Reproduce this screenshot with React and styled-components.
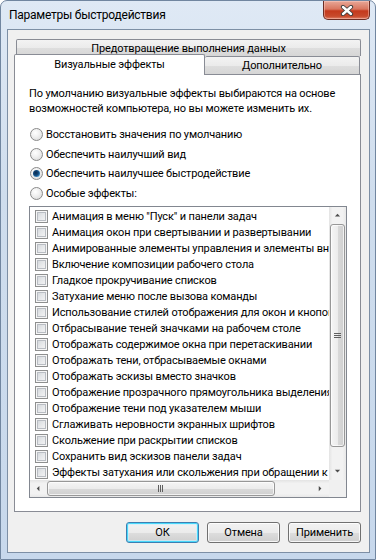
import React from 'react';
import styled, { createGlobalStyle } from 'styled-components';

const GlobalStyle = createGlobalStyle`
  html, body {
    margin: 0;
    padding: 0;
  }
  body {
    width: 376px;
    height: 560px;
    overflow: hidden;
    background: #ffffff;
    font-family: 'Segoe UI', Roboto, 'Noto Sans', sans-serif;
    font-size: 11px;
    letter-spacing: -0.15px;
    color: #000;
  }
`;

const Window = styled.div`
  box-sizing: border-box;
  width: 376px;
  height: 560px;
  display: flex;
  flex-direction: column;
  border: 1px solid #7186a0;
  border-radius: 7px 7px 0 0;
  background: linear-gradient(180deg, #dfe9f5 0%, #cfdded 35%, #c7d8ec 100%);
`;

const TitleBar = styled.div`
  height: 28px;
  display: flex;
  align-items: flex-start;
  flex-shrink: 0;
`;

const Title = styled.span`
  padding: 6px 0 0 8px;
  font-size: 12px;
  letter-spacing: -0.25px;
  line-height: 16px;
  white-space: nowrap;
`;

const CloseButton = styled.div`
  margin-left: auto;
  margin-right: 5px;
  width: 47px;
  height: 19px;
  box-sizing: border-box;
  display: flex;
  align-items: center;
  justify-content: center;
  border: 1px solid #6b2d24;
  border-top: none;
  border-radius: 0 0 5px 5px;
  background: linear-gradient(180deg, #e8a898 0%, #d9765f 45%, #c4391c 55%, #c84a2c 85%, #e0826a 100%);
  box-shadow: inset 0 0 0 1px rgba(255, 210, 200, 0.45);
`;

const Client = styled.div`
  flex: 1;
  margin: 0 5px 6px 6px;
  box-sizing: border-box;
  display: flex;
  flex-direction: column;
  padding: 9px 8px 9px 6px;
  border: 1px solid #7d8fa5;
  background: #f0f0f0;
`;

const TabBack = styled.div`
  height: 17px;
  margin-left: 2px;
  box-sizing: border-box;
  border: 1px solid #898c95;
  border-bottom: none;
  border-radius: 2px 2px 0 0;
  background: linear-gradient(180deg, #f3f3f3 0%, #ebebeb 50%, #dedede 51%, #d6d6d6 100%);
  text-align: center;
  line-height: 17px;
  white-space: nowrap;
  flex-shrink: 0;
`;

const TabRow = styled.div`
  position: relative;
  z-index: 1;
  display: flex;
  align-items: flex-start;
  height: 20px;
  margin-top: -2px;
  flex-shrink: 0;
`;

const Tab = styled.div`
  box-sizing: border-box;
  width: ${(p) => p.$width}px;
  height: ${(p) => (p.$active ? 21 : 18)}px;
  margin-top: ${(p) => (p.$active ? 0 : 2)}px;
  border: 1px solid #898c95;
  border-bottom: none;
  ${(p) => (p.$active ? '' : 'border-left: none;')}
  border-radius: 2px 2px 0 0;
  background: ${(p) =>
    p.$active
      ? '#ffffff'
      : 'linear-gradient(180deg, #f3f3f3 0%, #ebebeb 50%, #dedede 51%, #d6d6d6 100%)'};
  text-align: center;
  line-height: ${(p) => (p.$active ? 19 : 18)}px;
  white-space: nowrap;
`;

const Panel = styled.div`
  flex: 1;
  box-sizing: border-box;
  display: flex;
  flex-direction: column;
  padding: 11px 13px 13px 14px;
  border: 1px solid #898c95;
  background: #ffffff;
  min-height: 0;
`;

const Description = styled.div`
  line-height: 15px;
  white-space: nowrap;
`;

const RadioGroup = styled.div`
  margin-top: 9px;
  display: flex;
  flex-direction: column;
`;

const RadioRow = styled.label`
  height: 19.5px;
  display: flex;
  align-items: center;
  gap: 3px;
  white-space: nowrap;
`;

const RadioCircle = styled.span`
  position: relative;
  width: 13px;
  height: 13px;
  margin-left: 1px;
  box-sizing: border-box;
  border-radius: 50%;
  border: 1px solid #8a8a8a;
  background: radial-gradient(circle at 40% 35%, #ffffff 0%, #f1f1f1 40%, #d4d4d4 100%);
  flex-shrink: 0;

  &::after {
    content: '';
    display: ${(p) => (p.$checked ? 'block' : 'none')};
    position: absolute;
    left: 2px;
    top: 2px;
    width: 7px;
    height: 7px;
    border-radius: 50%;
    background: radial-gradient(circle at 40% 40%, #0b2a4d 0%, #134c80 45%, #4b9fd8 80%, #a6d2f0 100%);
  }
`;

const ListBox = styled.div`
  margin-top: 3px;
  flex: 1;
  min-height: 0;
  box-sizing: border-box;
  display: grid;
  grid-template-columns: 1fr 17px;
  grid-template-rows: 1fr 17px;
  border: 1px solid #828790;
  background: #ffffff;
`;

const Items = styled.div`
  overflow: hidden;
  padding-top: 1px;
`;

const Item = styled.div`
  height: 16px;
  display: flex;
  align-items: center;
  gap: 4px;
  padding-left: 5px;
  white-space: nowrap;
`;

const CheckBox = styled.span`
  width: 13px;
  height: 13px;
  box-sizing: border-box;
  border: 1px solid #8e8f8f;
  background: linear-gradient(135deg, #cdd1d6 0%, #e6e8ea 50%, #f8f8f8 100%);
  box-shadow: inset 0 0 0 1px #f6f6f6, inset 0 0 0 2px #b9bdc3;
  flex-shrink: 0;
`;

const VScroll = styled.div`
  display: flex;
  flex-direction: column;
  background: linear-gradient(90deg, #e3e3e3 0%, #f2f2f2 20%, #f2f2f2 80%, #e8e8e8 100%);
`;

const HScroll = styled.div`
  display: flex;
  background: linear-gradient(180deg, #e3e3e3 0%, #f2f2f2 20%, #f2f2f2 80%, #e8e8e8 100%);
`;

const ArrowBox = styled.div`
  width: 17px;
  height: 17px;
  display: flex;
  align-items: center;
  justify-content: center;
  flex-shrink: 0;
`;

const Thumb = styled.div`
  box-sizing: border-box;
  display: flex;
  align-items: center;
  justify-content: center;
  border: 1px solid #979797;
  border-radius: 3px;
  background: ${(p) =>
    p.$vertical
      ? 'linear-gradient(90deg, #f5f5f5 0%, #ececec 50%, #d9d9d9 51%, #d0d0d0 100%)'
      : 'linear-gradient(180deg, #f5f5f5 0%, #ececec 50%, #d9d9d9 51%, #d0d0d0 100%)'};
  box-shadow: inset 0 0 0 1px rgba(255, 255, 255, 0.7);
  ${(p) =>
    p.$vertical
      ? `height: ${p.$size}px; margin: 0 1px;`
      : `width: ${p.$size}px; margin: 1px 0;`}
`;

const Corner = styled.div`
  background: #f0f0f0;
`;

const ButtonRow = styled.div`
  margin-top: 10px;
  display: flex;
  justify-content: flex-end;
  gap: 8px;
  flex-shrink: 0;
`;

const Button = styled.button`
  width: 73px;
  height: 21px;
  box-sizing: border-box;
  padding: 0;
  font-family: inherit;
  font-size: 11px;
  letter-spacing: inherit;
  color: #000;
  border: 1px solid ${(p) => (p.$default ? '#3c7fb1' : '#707070')};
  border-radius: 3px;
  background: linear-gradient(180deg, #f2f2f2 0%, #ebebeb 50%, #dddddd 51%, #cfcfcf 100%);
  box-shadow: ${(p) =>
    p.$default
      ? 'inset 0 0 0 1px #48d8fb, inset 0 0 0 2px rgba(200, 240, 255, 0.6)'
      : 'inset 0 0 0 1px rgba(255, 255, 255, 0.8)'};
`;

const CloseGlyph = () => (
  <svg width="14" height="11" viewBox="0 0 14 11">
    <path d="M3 2 L11 9 M11 2 L3 9" stroke="#3a3a3a" strokeWidth="4.2" strokeLinecap="round" />
    <path d="M3 2 L11 9 M11 2 L3 9" stroke="#ffffff" strokeWidth="2.4" strokeLinecap="round" />
  </svg>
);

const Arrow = ({ dir }) => {
  const shapes = {
    up: '1,5 4,2 7,5',
    down: '1,2 4,5 7,2',
    left: '5,1 2,4 5,7',
    right: '2,1 5,4 2,7',
  };
  return (
    <svg width="7" height="7" viewBox="0 0 8 8">
      <polygon points={shapes[dir]} fill="#4d4d4d" />
    </svg>
  );
};

const Grip = ({ vertical }) =>
  vertical ? (
    <svg width="7" height="6" viewBox="0 0 7 6">
      <path d="M0 0.5 H7 M0 2.5 H7 M0 4.5 H7" stroke="#5f5f5f" strokeWidth="1" />
    </svg>
  ) : (
    <svg width="6" height="7" viewBox="0 0 6 7">
      <path d="M0.5 0 V7 M2.5 0 V7 M4.5 0 V7" stroke="#5f5f5f" strokeWidth="1" />
    </svg>
  );

const radios = [
  { label: 'Восстановить значения по умолчанию' },
  { label: 'Обеспечить наилучший вид' },
  { label: 'Обеспечить наилучшее быстродействие', checked: true },
  { label: 'Особые эффекты:' },
];

const effects = [
  'Анимация в меню "Пуск" и панели задач',
  'Анимация окон при свертывании и развертывании',
  'Анимированные элементы управления и элементы внутри окна',
  'Включение композиции рабочего стола',
  'Гладкое прокручивание списков',
  'Затухание меню после вызова команды',
  'Использование стилей отображения для окон и кнопок',
  'Отбрасывание теней значками на рабочем столе',
  'Отображать содержимое окна при перетаскивании',
  'Отображать тени, отбрасываемые окнами',
  'Отображать эскизы вместо значков',
  'Отображение прозрачного прямоугольника выделения',
  'Отображение тени под указателем мыши',
  'Сглаживать неровности экранных шрифтов',
  'Скольжение при раскрытии списков',
  'Сохранить вид эскизов панели задач',
  'Эффекты затухания или скольжения при обращении к меню',
];

const App = () => (
  <>
    <GlobalStyle />
    <Window>
      <TitleBar>
        <Title>Параметры быстродействия</Title>
        <CloseButton>
          <CloseGlyph />
        </CloseButton>
      </TitleBar>
      <Client>
        <TabBack>Предотвращение выполнения данных</TabBack>
        <TabRow>
          <Tab $active $width={191}>Визуальные эффекты</Tab>
          <Tab $width={155}>Дополнительно</Tab>
        </TabRow>
        <Panel>
          <Description>
            По умолчанию визуальные эффекты выбираются на основе
            <br />
            возможностей компьютера, но вы можете изменить их.
          </Description>
          <RadioGroup>
            {radios.map((r) => (
              <RadioRow key={r.label}>
                <RadioCircle $checked={r.checked} />
                {r.label}
              </RadioRow>
            ))}
          </RadioGroup>
          <ListBox>
            <Items>
              {effects.map((e) => (
                <Item key={e}>
                  <CheckBox />
                  {e}
                </Item>
              ))}
            </Items>
            <VScroll>
              <ArrowBox>
                <Arrow dir="up" />
              </ArrowBox>
              <Thumb $vertical $size={223}>
                <Grip vertical />
              </Thumb>
              <div style={{ flex: 1 }} />
              <ArrowBox>
                <Arrow dir="down" />
              </ArrowBox>
            </VScroll>
            <HScroll>
              <ArrowBox>
                <Arrow dir="left" />
              </ArrowBox>
              <Thumb $size={228}>
                <Grip />
              </Thumb>
              <div style={{ flex: 1 }} />
              <ArrowBox>
                <Arrow dir="right" />
              </ArrowBox>
            </HScroll>
            <Corner />
          </ListBox>
        </Panel>
        <ButtonRow>
          <Button $default>ОК</Button>
          <Button>Отмена</Button>
          <Button>Применить</Button>
        </ButtonRow>
      </Client>
    </Window>
  </>
);

export default App;
